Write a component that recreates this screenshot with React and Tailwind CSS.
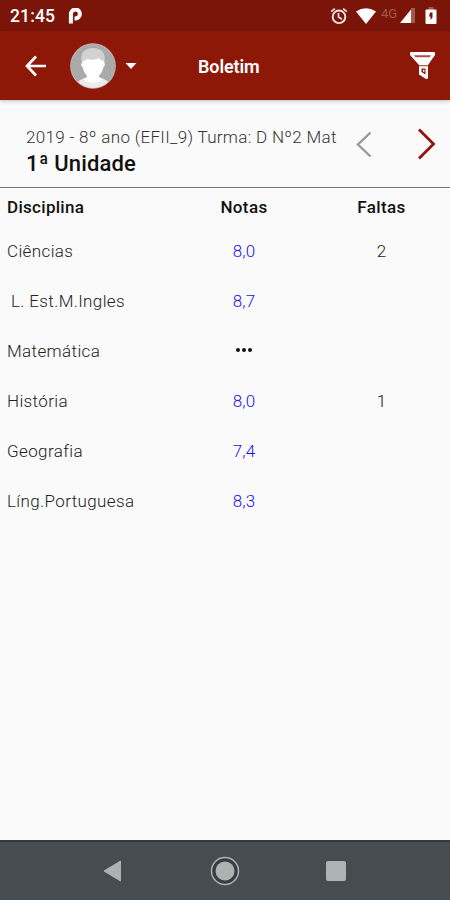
import React from 'react';

const grades = [
  { subject: 'Ciências', grade: '8,0', absences: '2' },
  { subject: 'L. Est.M.Ingles', grade: '8,7', absences: '', indent: true },
  { subject: 'Matemática', grade: null, absences: '' },
  { subject: 'História', grade: '8,0', absences: '1' },
  { subject: 'Geografia', grade: '7,4', absences: '' },
  { subject: 'Líng.Portuguesa', grade: '8,3', absences: '' },
];

const StatusBar = () => (
  <div className="flex h-[31px] items-center bg-[#7b1509] pl-[10px] pr-[13px] text-white">
    <span className="mt-[2px] text-[17.5px] font-medium leading-none tracking-[0.15px]">21:45</span>
    <svg className="ml-[13px] mt-px" width="15" height="16" viewBox="0 0 15 16" fill="none">
      <path d="M2.900 15.500V6A4.500 4.500 0 1 1 7.500 10.500H6.500" stroke="#fff" strokeWidth="4" />
    </svg>
    <svg className="ml-auto" width="18" height="18" viewBox="0 0 18 18" fill="none" stroke="#f3e3e1">
      <circle cx="9" cy="9.8" r="6.3" strokeWidth="1.900" />
      <path d="M8.500 6v4l3.500 2.200M1.200 4.700l3.600-3M16.800 4.700l-3.600-3" strokeWidth="1.700" />
    </svg>
    <svg className="ml-[8px]" width="20" height="16" viewBox="0 0 20 16" fill="#fff">
      <path d="M0 3.5Q10-3 20 3.5L10 16Z" />
    </svg>
    <span className="ml-[5px] -mt-[5px] w-[18px] whitespace-nowrap text-[13px] leading-none text-[#a6574e]">4G</span>
    <svg className="ml-px" width="15" height="15" viewBox="0 0 15 15">
      <path d="M11 0l4-1v16h-4z" fill="#a6574e" />
      <path d="M0 15L11 1.500V15z" fill="#fff" />
    </svg>
    <svg className="ml-[10px]" width="12" height="17" viewBox="0 0 12 17">
      <path d="M3.500 0h5v3h-5z" fill="#a6574e" />
      <path d="M1.500 2.500h9a1 1 0 0 1 1 1V16a1 1 0 0 1-1 1h-9a1 1 0 0 1-1-1V3.500a1 1 0 0 1 1-1z" fill="#fff" />
      <path d="M5 5.500h2.500v5L5.500 13V9.500H4z" fill="#7b1509" />
    </svg>
  </div>
);

const Avatar = () => (
  <svg className="ml-[23px]" width="46" height="46" viewBox="0 0 46 46">
    <clipPath id="avatar">
      <circle cx="23" cy="23" r="22" />
    </clipPath>
    <circle cx="23" cy="23" r="22.800" fill="#c2bebb" />
    <g clipPath="url(#avatar)">
      <path d="M0 0h46v46H0z" fill="#aaaaaa" />
      <path d="M5 46C6 38 11 36 18 34h10c7 2 12 4 13 12z" fill="#ececec" />
      <path d="M17 28h12v6l3 2c-3 5-15 5-18 0l3-2z" fill="#fff" />
      <path d="M12 20C9 10 15 5 23 5s14 5 11 15z" fill="#d2d2d2" />
      <path d="M13 18c2 0 3-1 4-2 4 1 9 1 12-1 1 2 3 3 5 3l1 4-2 3c-1 6-5 10-10 10s-9-4-10-10l-2-3z" fill="#fff" />
    </g>
  </svg>
);

const AppBar = () => (
  <div className="relative z-10 flex h-[69px] items-center bg-[#8d1808] pl-[25px] pr-[15px] shadow-[0_1px_4px_rgba(0,0,0,0.25)]">
    <svg width="22" height="22" viewBox="0 0 22 22" fill="none" stroke="#fff" strokeWidth="2.700">
      <path d="M21 11H2.500M11 1.500L2 11l9 9.500" />
    </svg>
    <Avatar />
    <svg className="ml-[9px]" width="12" height="6" viewBox="0 0 12 6" fill="#fff">
      <path d="M.5 0h11L6 6z" />
    </svg>
    <h1 className="ml-[61px] mt-[2px] text-[18px] font-semibold leading-none tracking-[-0.1px] text-white">Boletim</h1>
    <svg className="ml-auto" width="25" height="27" viewBox="0 0 25 27">
      <path d="M1 0h23q1 0 1 1v2l-7 10v13.500l-2 .5-7-4.500V13L0 3V1q0-1 1-1z" fill="#fff" />
      <path d="M4 3.200h17l-1.500 2h-14z" fill="#a84f43" />
      <path d="M9 13.700h9" stroke="#a84f43" strokeWidth="1.200" />
      <path d="M11.500 16.500h4v6l-4-2.500z" fill="#8d1808" />
      <path d="M13 17.800h1.500v2H13z" fill="#fff" />
    </svg>
  </div>
);

const TermHeader = () => (
  <div className="flex h-[88px] items-center border-b border-[#777] pl-[26px] pr-[14px]">
    <div className="mt-[16px] whitespace-nowrap">
      <p className="text-[17px] font-light leading-[24px] tracking-[0.32px] text-[#333]">2019 - 8º ano (EFII_9) Turma: D Nº2 Mat</p>
      <h2 className="text-[22px] font-medium leading-[30px] tracking-[0.15px] text-[#111]">1ª Unidade</h2>
    </div>
    <svg className="ml-auto mt-px" width="16" height="27" viewBox="0 0 16 27" fill="none" stroke="#999" strokeWidth="2.400">
      <path d="M14.500 1.500L2 13.500l12.500 12" />
    </svg>
    <svg className="ml-[45px]" width="19" height="32" viewBox="0 0 19 32" fill="none" stroke="#941010" strokeWidth="2.800">
      <path d="M2 1.500L16.500 16 2 30.500" />
    </svg>
  </div>
);

const GradesTable = () => (
  <div className="flex-1 text-[17px] tracking-[0.38px] text-[#222]">
    <div className="grid h-[39px] grid-cols-[175px_138px_137px] items-center font-medium text-[#111]">
      <span className="pl-[7px] tracking-[0.3px]">Disciplina</span>
      <span className="text-center">Notas</span>
      <span className="text-center">Faltas</span>
    </div>
    {grades.map((item) => (
      <div key={item.subject} className="grid h-[50px] grid-cols-[175px_138px_137px] items-center font-light">
        <span className={item.indent ? 'pl-[11px]' : 'pl-[7px]'}>{item.subject}</span>
        {item.grade ? (
          <span className="-mt-px text-center tracking-[0.1px] text-[#1a10ee]">{item.grade}</span>
        ) : (
          <span className="-mt-[4px] flex justify-center gap-[2.5px]">
            <i className="size-[3.5px] rounded-full bg-[#111]" />
            <i className="size-[3.5px] rounded-full bg-[#111]" />
            <i className="size-[3.5px] rounded-full bg-[#111]" />
          </span>
        )}
        <span className="-mt-px text-center tracking-normal">{item.absences}</span>
      </div>
    ))}
  </div>
);

const NavBar = () => (
  <div className="flex h-[60px] items-center border-t-2 border-[#2f3c3d] bg-[#454d52] pl-[102px] pr-[104px]">
    <svg width="20" height="22" viewBox="0 0 20 22" fill="#abb3b3">
      <path d="M18.500 1v20L2 11z" stroke="#abb3b3" strokeLinejoin="round" />
    </svg>
    <svg className="ml-[88px]" width="30" height="30" viewBox="0 0 30 30">
      <circle cx="15" cy="15" r="13.500" fill="#363e42" stroke="#abb3b3" strokeWidth="1.500" />
      <circle cx="15" cy="15" r="9.500" fill="#abb3b3" />
    </svg>
    <div className="ml-auto size-5 rounded-[2px] bg-[#abb3b3]" />
  </div>
);

const App = () => {
  return (
    <div className="flex h-[900px] w-[450px] flex-col overflow-hidden bg-[#fafafa] font-['Roboto',sans-serif]">
      <StatusBar />
      <AppBar />
      <TermHeader />
      <GradesTable />
      <NavBar />
    </div>
  );
};

export default App;
